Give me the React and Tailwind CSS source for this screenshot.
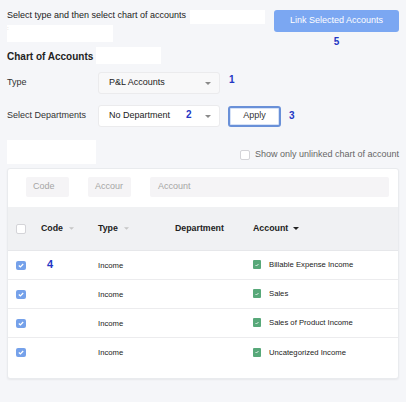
import React from "react";

const FONT = { fontFamily: "'Liberation Sans', Arial, sans-serif" };

function Caret({ className = "fill-[#8a8a8a]", w = 6, h = 3 }) {
    return (
        <svg width={w} height={h} viewBox="0 0 6 3" className={className}>
            <path d="M0 0 L6 0 L3 3 Z" />
        </svg>
    );
}

function BlueCheck() {
    return (
        <span className="w-[10px] h-[9px] rounded-[2px] bg-[#75a1ea] flex items-center justify-center">
            <svg width="6" height="5" viewBox="0 0 6 5">
                <path d="M0.8 2.5 L2.4 3.9 L5.2 1" stroke="white" strokeWidth="1.3" fill="none" />
            </svg>
        </span>
    );
}

function GreenCheck() {
    return (
        <span className="w-[8px] h-[9px] rounded-[1px] bg-[#57a879] flex items-center justify-center">
            <svg width="4" height="4" viewBox="0 0 4 4">
                <path d="M0.5 2 L1.5 3 L3.5 1" stroke="white" strokeWidth="0.8" fill="none" />
            </svg>
        </span>
    );
}

const rows = [
    "Billable Expense Income",
    "Sales",
    "Sales of Product Income",
    "Uncategorized Income",
];

export default function App() {
    return (
        <div style={FONT} className="w-full h-[402px] bg-[#f5f6f9] px-[7px] pt-[10px] text-[#222]">

            {/* TOP */}
            <div className="flex items-start h-[32px]">
                <div className="flex-1">
                    <div className="flex items-start h-[15px]">
                        <span className="text-[9px] leading-[12px] -mt-[1px] whitespace-nowrap">Select type and then select chart of accounts</span>
                        <span className="ml-[4px] w-[75px] h-[14px] bg-white" />
                    </div>
                    <div className="flex">
                        <span className="w-[106px] h-[17px] bg-white text-[6px] text-[#c4c4c4] leading-[6px]">:</span>
                    </div>
                </div>
                <div className="w-[125px] flex flex-col items-center">
                    <button className="w-full h-[22px] rounded-[3px] bg-[#7ba7f2] text-white text-[9px]">
                        Link Selected Accounts
                    </button>
                    <span className="mt-[5px] text-[10px] font-bold text-[#2336c4] leading-none">5</span>
                </div>
            </div>

            {/* CHART OF ACCOUNTS */}
            <div className="flex items-center h-[17px] mt-[5px]">
                <span className="text-[10px] font-bold whitespace-nowrap pt-[2px]">Chart of Accounts</span>
                <span className="ml-[3px] w-[65px] h-[17px] bg-white" />
            </div>

            {/* TYPE */}
            <div className="flex items-center mt-[8px]">
                <span className="w-[91px] text-[9px] text-[#333]">Type</span>
                <div className="w-[122px] h-[22px] rounded-[3px] border border-[#ebebed] bg-[#f8f8f9] flex items-center justify-between pl-[10px] pr-[8px]">
                    <span className="text-[9px] text-[#222] whitespace-nowrap">P&amp;L Accounts</span>
                    <Caret />
                </div>
                <span className="ml-[9px] mb-[7px] text-[10px] font-bold text-[#2336c4] leading-none">1</span>
            </div>

            {/* DEPARTMENTS */}
            <div className="flex items-center mt-[11px]">
                <span className="w-[91px] text-[9px] text-[#333] whitespace-nowrap">Select Departments</span>
                <div className="w-[122px] h-[22px] rounded-[3px] border border-[#ebebed] bg-white flex items-center pl-[10px] pr-[8px]">
                    <span className="text-[9px] text-[#222] whitespace-nowrap">No Department</span>
                    <span className="ml-[16px] mb-[2px] text-[10px] font-bold text-[#2336c4] leading-none">2</span>
                    <span className="ml-auto"><Caret /></span>
                </div>
                <button className="ml-[8px] w-[53px] h-[21px] rounded-[3px] border-[2px] border-[#6990d8] bg-white text-[9px] text-[#333] shadow-[inset_0_0_0_1px_#d6e2f7]">
                    Apply
                </button>
                <span className="ml-[8px] text-[10px] font-bold text-[#2336c4] leading-none">3</span>
            </div>

            {/* FILTER BAR */}
            <div className="flex items-center justify-between h-[24px] mt-[13px]">
                <span className="w-[89px] h-[24px] bg-white" />
                <label className="flex items-center gap-[5px] mt-[5px]">
                    <span className="w-[10px] h-[10px] rounded-[2px] border border-[#d4d4d8] bg-white" />
                    <span className="text-[9px] text-[#666] whitespace-nowrap">Show only unlinked chart of account</span>
                </label>
            </div>

            {/* TABLE CARD */}
            <div className="mt-[4px] bg-white rounded-[3px] border border-[#e9ebee] shadow-[0_1px_2px_rgba(0,0,0,0.06)] pb-[11px]">

                <div className="flex items-center pt-[8px] pb-[10px] pl-[18px] pr-[9px]">
                    <div className="w-[43px] h-[20px] rounded-[2px] bg-[#f5f4f6] text-[9px] text-[#a5a5a5] flex items-center pl-[7px]">Code</div>
                    <div className="ml-[19px] w-[43px] h-[20px] rounded-[2px] bg-[#f5f4f6] text-[9px] text-[#a5a5a5] flex items-center pl-[7px] overflow-hidden whitespace-nowrap">Accour</div>
                    <div className="ml-[19px] flex-1 h-[20px] rounded-[2px] bg-[#f5f4f6] text-[9px] text-[#a5a5a5] flex items-center pl-[8px]">Account</div>
                </div>

                <div className="grid grid-cols-[33px_57px_77px_78px_1fr] items-center h-[44px] bg-[#f0f1f3] border-b border-[#e6e7ea] text-[8.8px] font-bold text-[#222]">
                    <div className="pl-[8px]">
                        <span className="block w-[10px] h-[10px] rounded-[2px] border border-[#d4d4d8] bg-white" />
                    </div>
                    <div className="flex items-center gap-[6px]">Code <Caret className="fill-[#c6c6c6]" w={5} h={3} /></div>
                    <div className="flex items-center gap-[6px]">Type <Caret className="fill-[#c6c6c6]" w={5} h={3} /></div>
                    <div>Department</div>
                    <div className="flex items-center gap-[5px]">Account <Caret className="fill-[#222]" /></div>
                </div>

                {rows.map((name, i) => (
                    <div
                        key={name}
                        className={`grid grid-cols-[33px_57px_77px_78px_1fr] items-center h-[29px] text-[7.7px] text-[#222] ${i < rows.length - 1 ? "border-b border-[#ececee]" : ""}`}
                    >
                        <div className="pl-[8px]"><BlueCheck /></div>
                        <div className="pl-[6px]">
                            {i === 0 && <span className="text-[11px] font-bold text-[#2336c4] leading-none">4</span>}
                        </div>
                        <div className="pt-[1px]">Income</div>
                        <div />
                        <div className="flex items-center gap-[8px]">
                            <GreenCheck />
                            <span>{name}</span>
                        </div>
                    </div>
                ))}

            </div>

        </div>
    );
}
